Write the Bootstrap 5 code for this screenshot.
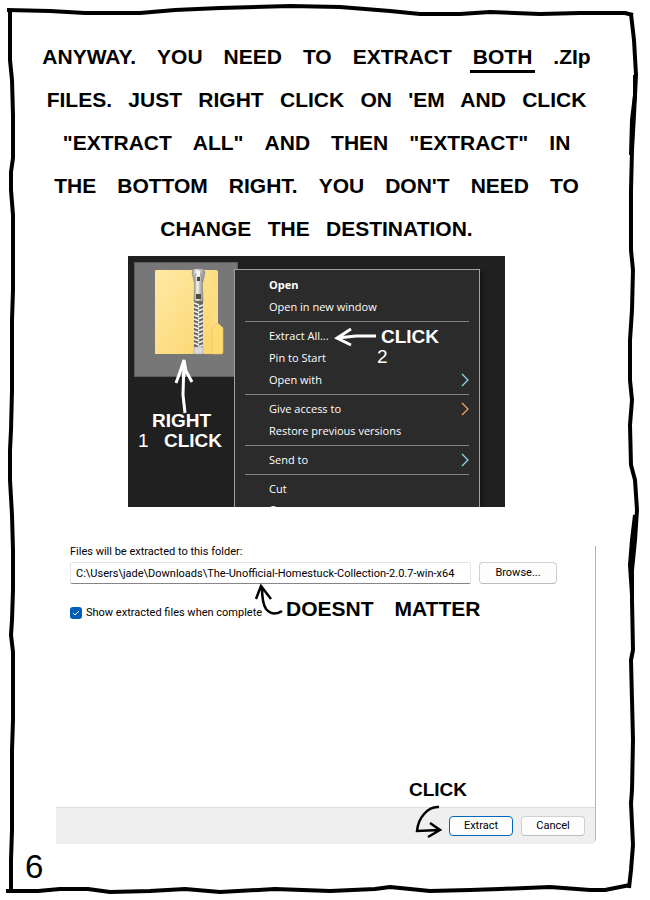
<!DOCTYPE html>
<html lang="en">
<head>
<meta charset="utf-8">
<meta name="viewport" content="width=device-width, initial-scale=1">
<title>Extracting the files</title>
<link href="https://cdn.jsdelivr.net/npm/bootstrap@5.3.0/dist/css/bootstrap.min.css" rel="stylesheet">
<style>
body{background:#fff;color:#000;font-family:Roboto,"Noto Sans",sans-serif}
.comic{padding:35px 17px 12px 0}
.frame{inset:0;pointer-events:none}
.hand{font-family:"Liberation Sans",sans-serif;font-weight:700;font-size:21px;line-height:43px}
.note{font-family:"Liberation Sans",sans-serif;font-weight:700;font-size:19px;line-height:18px;white-space:nowrap}
.note-wide{font-size:21px}
.numeral{font-weight:400}
.both{border-bottom:3px solid #000;padding:0 3px 2px;margin:0 -3px}
.desktop{max-width:377px;height:251px;margin-top:6px;background:#202020;color:#fff}
.tile{width:104px;height:115px;margin:6px;background:#777;border:1px solid #5c5c5c}
.ctx{left:106px;top:13px;width:246px;bottom:0;padding:4px 0;background:#2b2b2b;border:1px solid #a0a0a0;border-bottom:0;box-shadow:3px 3px 3px #151515}
.ctx button{height:22px;padding:0 10px 0 34px;font-family:"Open Sans",sans-serif;font-size:11px;line-height:22px;color:#fff;background:none;border:0;text-align:left}
.ctx button:last-child{height:20px;line-height:20px}
.ctx hr{margin:3px 10px;border-top:1px solid #808080;opacity:1}
.n-right{left:24px;top:156px}
.n-click{left:36px;top:176px}
.n-one{left:10px;top:176px}
.n-click2{left:253px;top:72px}
.n-two{left:249px;top:92px}
.a-up{left:46px;top:101px}
.a-left{left:206px;top:71px}
.dialog{margin:39px 37px 0 56px;border-right:1px solid #b5b5b5;border-bottom-right-radius:6px;font-size:11px;line-height:14px}
.dialog-main{min-height:261px;padding:0 38px 0 14px}
.head{height:16px;line-height:11px}
.path{height:22px;border:1px solid #e5e5e5;border-bottom-color:#868686;border-radius:2px;padding:0 5px;font-size:11px;min-width:0;color:#000}
.btn-win{height:22px;padding:0;border:1px solid #d0d0d0;border-bottom-color:#bbb;border-radius:4px;background:#fdfdfd;color:#000;font-size:11px;line-height:18px}
.btn-browse{width:78px;flex:none}
.btn-foot{width:64px;height:20px}
.btn-go{border-color:#0067c0}
.tick{appearance:none;width:12px;height:12px;margin:0;border-radius:3px;background:#005fb8}
.tick-mark{left:0;top:1px;pointer-events:none}
.check-row{margin-top:22px}
.foot{min-height:37px;padding:0 10px;background:#efefef;border-top:1px solid #ddd;border-bottom-right-radius:5px}
.n-matter{left:230px;top:54px}
.a-matter{left:199px;top:37px}
.n-go{right:128px;bottom:45px}
.a-go{right:152px;bottom:5px}
.page-no{padding:6px 0 0 25px;font-family:"Liberation Sans",sans-serif;font-size:33px;line-height:33px}
</style>
<script src="https://cdn.jsdelivr.net/npm/bootstrap@5.3.0/dist/js/bootstrap.bundle.min.js"></script>
</head>
<body>
<main class="comic position-relative min-vh-100 overflow-hidden">
  <svg class="frame position-absolute w-100 h-100" viewBox="0 0 650 900" preserveAspectRatio="none" fill="none" stroke="#000" stroke-width="4" stroke-linejoin="round" aria-hidden="true">
    <path d="M7 10L50 11L85 13L140 13L175 10L220 8L290 6L340 7L390 11L420 14L460 14L490 12L540 14L580 13L625 13L633 15"/>
    <path d="M10 10L10 60L12 80L13 115V158L11 172L11 190L13 215L13 290L12 320L12 390L11 430L10 450L10 480L12 515L13 550V590L12 620L11 635L13 652V720L12 750L12 830L11 860L11 889"/>
    <path d="M631 14L634 40L636 75L634 115L632 150L631 190V250L633 270L632 310L630 340V380L632 400L630 425L631 465L635 480L637 510L635 540L632 570V600L633 650L631 660L632 700L633 740L632 790L631 803L633 845L631 870L629 888"/>
    <path d="M635 75L635 95L632 120L631 155M635 515L632 540L630 565L632 595M12 327L12 385"/>
    <path d="M6 891H38L60 889L88 889L110 892L150 891L185 889L220 892L275 889L330 891L375 889L390 887L430 891L470 890L500 889L550 887L590 890L605 890L630 885"/>
  </svg>
  <p class="hand text-center mb-0">ANYWAY.&emsp;YOU&emsp;NEED&emsp;TO&emsp;EXTRACT&emsp;<span class="both">BOTH</span>&emsp;.ZIp<br>FILES.&ensp; JUST&ensp; RIGHT&ensp; CLICK&ensp; ON&ensp; 'EM&ensp; AND&ensp; CLICK<br>"EXTRACT&emsp;ALL"&emsp;AND&emsp;THEN&emsp;"EXTRACT"&emsp;IN<br>THE&emsp;BOTTOM&emsp;RIGHT.&emsp;YOU&emsp;DON'T&emsp;NEED&emsp;TO<br>CHANGE&ensp; THE&ensp; DESTINATION.</p>

  <section class="desktop position-relative overflow-hidden mx-auto d-flex align-items-start">
    <div class="tile">
      <svg width="102" height="113" viewBox="0 0 102 113" aria-hidden="true">
        <defs><linearGradient id="fold" x2="1" y2="1"><stop stop-color="#ffe9a6"/><stop offset="1" stop-color="#fbd66d"/></linearGradient>
        <linearGradient id="metal"><stop stop-color="#8e8e8e"/><stop offset=".35" stop-color="#f4f4f4"/><stop offset="1" stop-color="#8b8b8b"/></linearGradient></defs>
        <path d="M21 7H76Q78 7 78 9V91H20V8Z" fill="url(#fold)"/>
        <path d="M77 7H81Q83 7 83 9V60L88 65V89Q88 91 86 91H77Z" fill="#fddd84"/>
        <path d="M77 91V65L82 60L88 65V89Q88 91 86 91Z" fill="#ffdb73" stroke="#edc158" stroke-width=".6"/>
        <path d="M59 38H68V91H59Z" fill="#69675f"/>
        <path d="M59 40L64 42M68 42L63 44M59 44L64 46M68 46L63 48M59 48L64 50M68 50L63 52M59 52L64 54M68 54L63 56M59 56L64 58M68 58L63 60M59 60L64 62M68 62L63 64M59 64L64 66M68 66L63 68M59 68L64 70M68 70L63 72M59 72L64 74M68 74L63 76M59 76L64 78M68 78L63 80M59 80L64 82M68 82L63 84" stroke="#eee" stroke-width="1.8"/>
        <path d="M58 6H69L70 10L68 19H59L57 10Z" fill="url(#metal)" stroke="#888" stroke-width=".5"/>
        <path d="M60 12Q63 8 67 12L68 38H59Z" fill="url(#metal)" stroke="#777" stroke-width=".5"/>
        <path d="M62 14H65V18H62ZM61 31H66V36H61Z" fill="#4b4b42"/><path d="M62 8H65V13H62Z" fill="#f5f5f5"/>
        <path d="M59 84H68V91H59Z" fill="#d9d9d9" stroke="#999" stroke-width=".5"/>
      </svg>
    </div>
    <div class="ctx position-absolute d-flex flex-column">
      <button type="button" class="fw-bold">Open</button>
      <button type="button">Open in new window</button>
      <hr>
      <button type="button">Extract All...</button>
      <button type="button">Pin to Start</button>
      <button type="button" class="d-flex justify-content-between align-items-center">Open with<svg width="8" height="14" viewBox="0 0 8 14" fill="none" stroke="#8fd6e8" stroke-width="1.3" aria-hidden="true"><path d="M1 1L7 7L1 13"/></svg></button>
      <hr>
      <button type="button" class="d-flex justify-content-between align-items-center">Give access to<svg width="8" height="14" viewBox="0 0 8 14" fill="none" stroke="#eba66c" stroke-width="1.3" aria-hidden="true"><path d="M1 1L7 7L1 13"/></svg></button>
      <button type="button">Restore previous versions</button>
      <hr>
      <button type="button" class="d-flex justify-content-between align-items-center">Send to<svg width="8" height="14" viewBox="0 0 8 14" fill="none" stroke="#8fd6e8" stroke-width="1.3" aria-hidden="true"><path d="M1 1L7 7L1 13"/></svg></button>
      <hr>
      <button type="button">Cut</button>
      <button type="button">Copy</button>
    </div>
    <svg class="a-up position-absolute" width="20" height="58" viewBox="0 0 20 58" fill="none" stroke="#fff" stroke-width="3" aria-hidden="true"><path d="M11 56L9 38L10 4M2 26L6 15L10 3L12 14L18 25M10 5V20"/></svg>
    <span class="note position-absolute n-right">RIGHT</span>
    <span class="note position-absolute n-click">CLICK</span>
    <span class="note numeral position-absolute n-one">1</span>
    <svg class="a-left position-absolute" width="44" height="20" viewBox="0 0 44 20" fill="none" stroke="#fff" stroke-width="3" aria-hidden="true"><path d="M42 9L22 9L3 11M17 2L3 11L17 18"/></svg>
    <span class="note position-absolute n-click2">CLICK</span>
    <span class="note numeral position-absolute n-two">2</span>
  </section>

  <form class="dialog position-relative">
    <div class="dialog-main">
      <label class="head d-block" for="folder">Files will be extracted to this folder:</label>
      <div class="d-flex align-items-center gap-2">
        <input id="folder" class="path flex-grow-1" type="text" value="C:\Users\jade\Downloads\The-Unofficial-Homestuck-Collection-2.0.7-win-x64">
        <button type="button" class="btn btn-win btn-browse">Browse...</button>
      </div>
      <div class="check-row position-relative d-flex align-items-center">
        <input id="show" class="tick" type="checkbox" checked>
        <svg class="tick-mark position-absolute" width="12" height="12" viewBox="0 0 12 12" fill="none" stroke="#fff" aria-hidden="true"><path d="M3 6L5 8L9 4"/></svg>
        <label class="ps-1" for="show">Show extracted files when complete</label>
      </div>
    </div>
    <div class="foot d-flex justify-content-end align-items-center gap-2">
      <button type="button" class="btn btn-win btn-foot btn-go">Extract</button>
      <button type="button" class="btn btn-win btn-foot">Cancel</button>
    </div>
    <svg class="a-matter position-absolute" width="30" height="34" viewBox="0 0 30 34" fill="none" stroke="#000" stroke-width="2.5" aria-hidden="true"><path d="M27 28Q18 34 11 26Q7 20 7 4M1 16L6 3L16 16"/></svg>
    <span class="note note-wide position-absolute n-matter">DOESNT&emsp;MATTER</span>
    <span class="note position-absolute n-go">CLICK</span>
    <svg class="a-go position-absolute" width="28" height="34" viewBox="0 0 28 34" fill="none" stroke="#000" stroke-width="2.5" aria-hidden="true"><path d="M24 2C13 1 3 13 2 26L25 25M15 18L25 25L13 32"/></svg>
  </form>
  <div class="page-no">6</div>
</main>
</body>
</html>
